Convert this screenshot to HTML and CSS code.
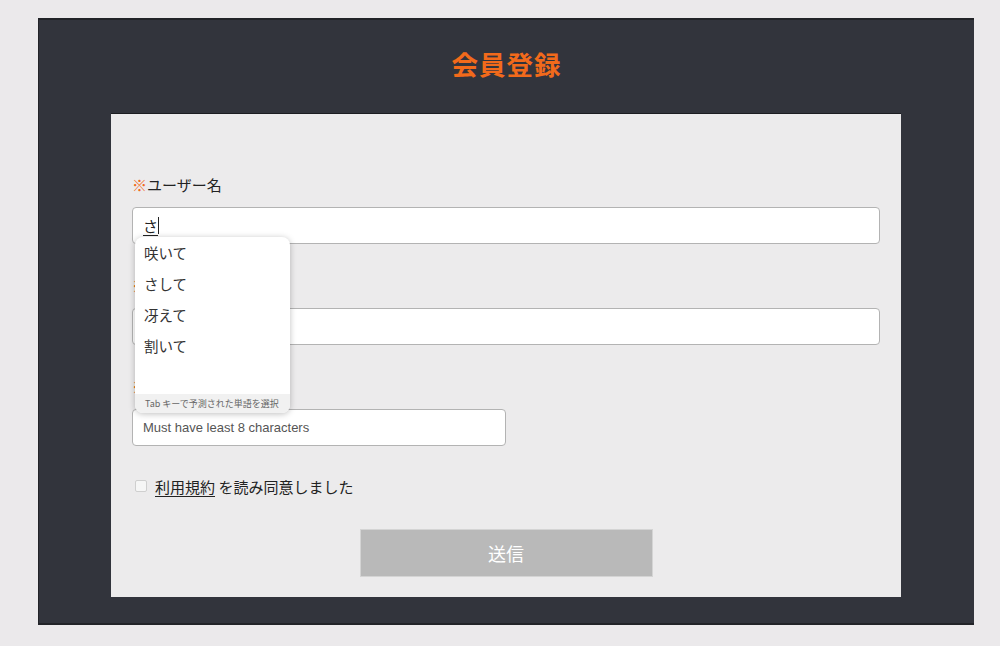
FILE: index.html
```html
<!DOCTYPE html>
<html lang="ja">
<head>
    <title>会員登録</title>
    <meta charset="UTF-8">
    <meta name="viewport" content="width=device-width, initial-scale=1.0">
    <link rel="stylesheet" href="styles.css">
</head>

<body>
    <div class="register-container">
        <h1>会員登録</h1>
        <form class="register-card">
            <div class="field">
                <label><span class="mark">※</span>ユーザー名</label>
                <div class="input-wrap">
                    <div class="text-input"><span class="composing">さ</span><span class="caret"></span></div>
                    <div class="suggest-box">
                        <ul class="suggest-list">
                            <li>咲いて</li>
                            <li>さして</li>
                            <li>冴えて</li>
                            <li>割いて</li>
                        </ul>
                        <div class="suggest-footer">Tab キーで予測された単語を選択</div>
                    </div>
                </div>
            </div>
            <div class="field">
                <label><span class="mark">※</span>メールアドレス</label>
                <div class="text-input"></div>
            </div>
            <div class="field">
                <label><span class="mark">※</span>パスワード</label>
                <div class="text-input short"><span class="placeholder">Must have least 8 characters</span></div>
            </div>
            <div class="agree-row">
                <span class="checkbox"></span>
                <span><a class="terms">利用規約</a> を読み同意しました</span>
            </div>
            <div class="controls">
                <button type="button" class="submit-btn">送信</button>
            </div>
        </form>
    </div>
</body>

</html>
```

FILE: styles.css
```css
body {
    font-family: 'Noto Sans CJK JP', 'Noto Sans', sans-serif;
    margin: 0;
    padding: 18px 0 0 38px;
    background-color: #ebe9eb;
}

.register-container {
    background-color: #32343c;
    width: 936px;
    height: 607px;
    box-sizing: border-box;
    padding: 0 72px;
    border-top: 2px solid #222328;
    border-bottom: 2px solid #222328;
    border-left: 1px solid #222328;
}

h1 {
    margin: 0;
    height: 93px;
    line-height: 88px;
    text-align: center;
    color: #f26a1b;
    font-size: 26.5px;
    font-weight: bold;
    letter-spacing: 1px;
}

.register-card {
    background-color: #ecebec;
    width: 790px;
    box-sizing: border-box;
    padding: 61px 21px 20px;
    border-top: 1px solid #1c1d21;
}

.field {
    margin-bottom: 32px;
}

.field label {
    display: block;
    font-size: 15px;
    line-height: 20px;
    color: #222;
    margin-bottom: 12px;
}

.mark {
    color: #f26a1b;
}

.input-wrap {
    position: relative;
}

.text-input {
    height: 37px;
    box-sizing: border-box;
    background-color: #fff;
    border: 1.5px solid #b3b3b3;
    border-radius: 4px;
    padding: 0 10px;
    display: flex;
    align-items: center;
    font-size: 15px;
    color: #222;
}

.text-input.short {
    width: 374px;
}

.composing {
    text-decoration: underline;
    text-underline-offset: 3px;
}

.caret {
    display: inline-block;
    width: 1px;
    height: 17px;
    background-color: #222;
}

.placeholder {
    font-family: 'Liberation Sans', Arial, sans-serif;
    font-size: 13px;
    color: #555;
}

.suggest-box {
    position: absolute;
    top: 30px;
    left: 3px;
    width: 155px;
    height: 176px;
    background-color: #fff;
    border-radius: 8px;
    box-shadow: 0 1px 6px rgba(0, 0, 0, 0.25);
    display: flex;
    flex-direction: column;
    overflow: hidden;
    z-index: 2;
}

.suggest-list {
    list-style: none;
    margin: 0;
    padding: 0;
    flex: 1;
}

.suggest-list li {
    height: 31px;
    line-height: 31px;
    padding-left: 9px;
    font-size: 14.5px;
    color: #333;
}

.suggest-footer {
    height: 19px;
    line-height: 19px;
    background-color: #f1f1f1;
    padding-left: 10px;
    font-size: 9px;
    color: #666;
}

.agree-row {
    display: flex;
    align-items: center;
    height: 20px;
    font-size: 15px;
    color: #222;
    padding-left: 3px;
    margin-top: -2px;
}

.checkbox {
    width: 10px;
    height: 10px;
    border: 1px solid #cfcfcf;
    border-radius: 2px;
    background-color: #f6f6f6;
    margin-right: 8px;
}

.terms {
    text-decoration: underline;
    text-underline-offset: 3px;
}

.controls {
    display: flex;
    justify-content: center;
    margin-top: 33px;
}

.submit-btn {
    width: 293px;
    height: 48px;
    background-color: #b9b9b9;
    border: 1px solid #d4d4d4;
    color: #fff;
    font-family: 'Noto Sans CJK JP', sans-serif;
    font-size: 18px;
    cursor: pointer;
}
```
